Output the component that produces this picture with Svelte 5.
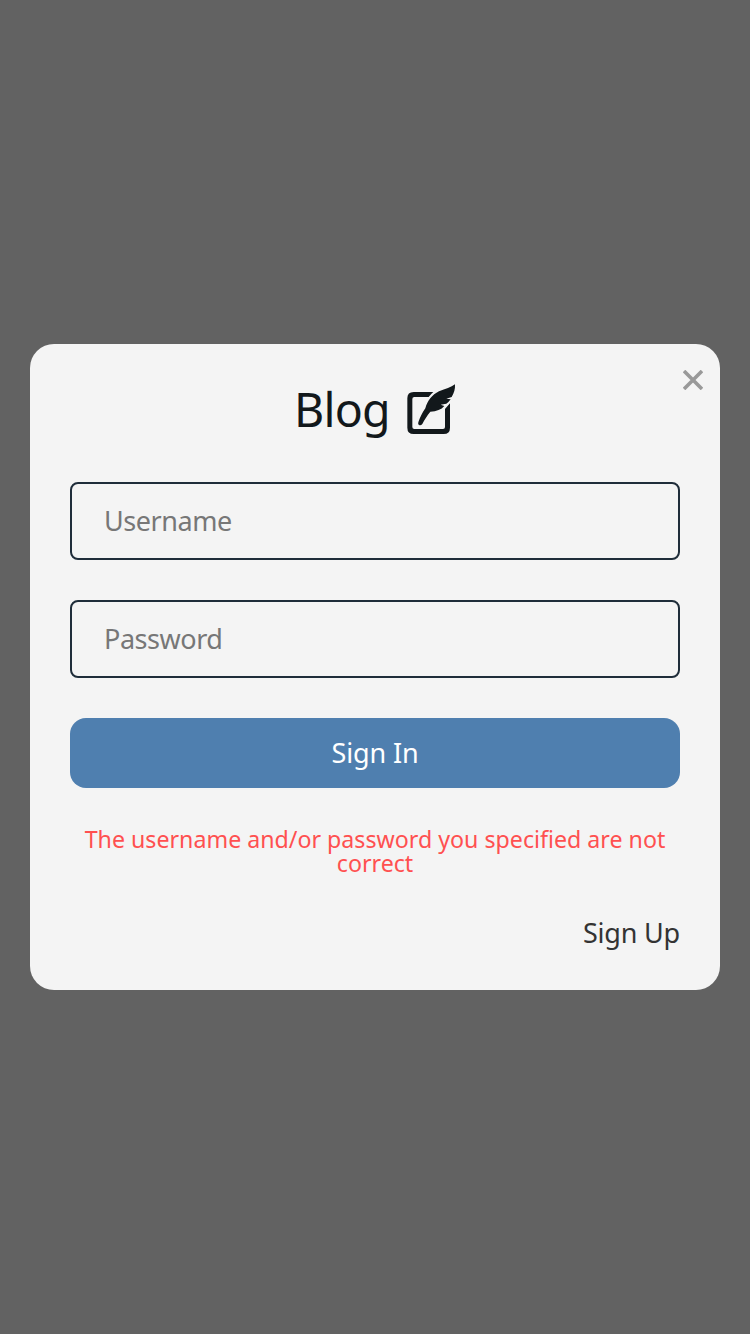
<script>
  let username = $state('');
  let password = $state('');
</script>

<main class="overlay">
  <form class="card" onsubmit={(e) => e.preventDefault()}>
    <button class="close" type="button" aria-label="Close">
      <svg viewBox="0 0 20 20" width="20" height="20">
        <path d="M1 1 19 19M19 1 1 19" fill="none" stroke="#999" stroke-width="3.6" />
      </svg>
    </button>
    <header class="brand">
      <h1>Blog</h1>
      <svg class="logo" viewBox="30 24 150 150" aria-hidden="true">
        <path d="M112 48H53Q34 48 34 67V155Q34 174 53 174H143Q162 174 162 155V82L154 91 147 99V153Q147 159 141 159H55Q49 159 49 153V69Q49 63 55 63H98Q104 55 112 48Z" />
        <path d="M177 25C178 39 174 52 167 63L151 68 164 70Q158 79 151 83L134 86 145 90C136 101 122 106 103 107C93 119 85 132 79 144Q74 150 69 147Q65 145 67 139C72 124 79 109 88 97C94 75 108 56 129 46C149 38 165 35 177 25Z" />
      </svg>
    </header>
    <input class="username" placeholder="Username" bind:value={username} />
    <input class="password" type="password" placeholder="Password" bind:value={password} />
    <button class="submit" type="submit"><span>Sign In</span></button>
    <p class="error">The username and/or password you specified are not correct</p>
    <a class="signup" href="#signup">Sign Up</a>
  </form>
</main>

<style>
  :global(body) { background: #626262; }
  .overlay {
    box-sizing: border-box;
    min-height: 1334px;
    padding: 0 30px;
    display: flex;
    align-items: center;
    background: #626262;
    font-family: "Noto Sans", sans-serif;
  }
  .card {
    position: relative;
    box-sizing: border-box;
    width: 100%;
    height: 646px;
    padding: 40px;
    display: flex;
    flex-direction: column;
    background: #f4f4f4;
    border-radius: 24px;
  }
  .close {
    position: absolute;
    top: 26px;
    right: 17px;
    padding: 0;
    border: 0;
    background: none;
    line-height: 0;
  }
  .brand {
    display: flex;
    justify-content: center;
    gap: 16px;
    height: 50px;
    margin-bottom: 48px;
    color: #12181b;
  }
  h1 {
    margin: 0;
    font-size: 46.5px;
    font-weight: 400;
    line-height: 50px;
    letter-spacing: -0.8px;
  }
  .logo { width: 50px; height: 50px; fill: #12181b; }
  input {
    box-sizing: border-box;
    width: 100%;
    height: 78px;
    margin: 0 0 40px;
    padding: 0 32px 2px;
    border: 2px solid #1f2d3a;
    border-radius: 8px;
    outline: 0;
    background: transparent;
    font: 27px "Noto Sans", sans-serif;
    letter-spacing: -0.45px;
  }
  input::placeholder { color: #777; opacity: 1; }
  .submit {
    height: 70px;
    margin-bottom: 40px;
    padding: 0 0 2px;
    border: 0;
    border-radius: 16px;
    background: #4f7faf;
    color: #fff;
    font: 27px "Noto Sans", sans-serif;
    letter-spacing: -0.15px;
  }
  .error {
    margin: -1px 0 41px;
    color: #ff5050;
    font-size: 23.2px;
    line-height: 24px;
    text-align: center;
  }
  .signup {
    align-self: flex-end;
    color: #333;
    font-size: 27px;
    line-height: 34px;
    letter-spacing: -0.2px;
    text-decoration: none;
  }
</style>
